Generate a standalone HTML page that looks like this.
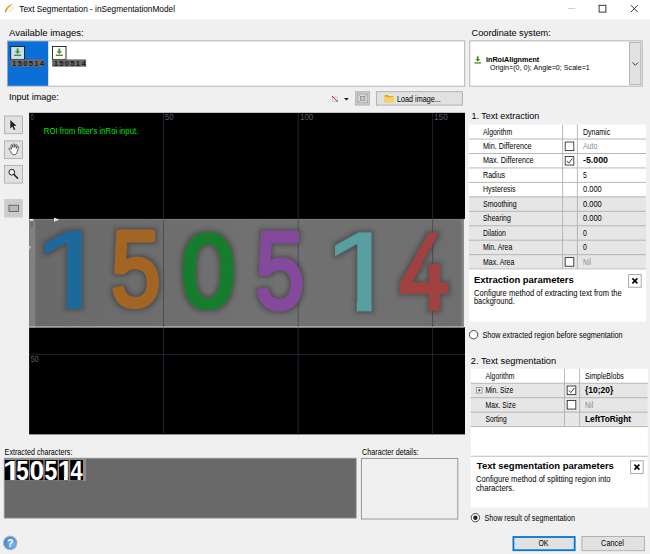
<!DOCTYPE html>
<html><head><meta charset="utf-8"><title>Text Segmentation</title>
<style>
html,body{margin:0;padding:0}
body{width:650px;height:554px;overflow:hidden;background:#f0f0f0;position:relative;font-family:'Liberation Sans', sans-serif}
.a{position:absolute;box-sizing:border-box}
svg{display:block;overflow:hidden}
</style></head><body>
<!-- title bar -->

<svg class="a" style="left:0;top:0" width="650" height="20" viewBox="0 0 650 20">
<rect x="0" y="0" width="650" height="19.400" fill="#fff"/>
<path d="M4.8 12.5 C5 8.6 8.3 4.9 13.4 3.8 C9.6 5.9 7.2 8.6 6 12.3 Z" fill="#f08a1c"/>
<path d="M12.7 6.8 C13.2 9 11.6 10.7 9.3 11.2" fill="none" stroke="#f7c088" stroke-width="0.8"/>
<path d="M568 8.500 H575.200" stroke="#cdcdcd" stroke-width="0.900"/>
<rect x="599.100" y="5.300" width="6.800" height="6.800" fill="none" stroke="#222" stroke-width="0.900"/>
<path d="M630.800 5.200 L637.800 12.200 M637.800 5.200 L630.800 12.200" stroke="#222" stroke-width="0.900"/>
</svg>

<!-- available images list -->
<svg class="a" style="left:0;top:38px" width="470" height="52" viewBox="0 38 470 52">
<rect x="7.400" y="40.900" width="457.300" height="45.300" fill="#fff" stroke="#abadb3" stroke-width="0.900"/>
<rect x="7.800" y="41.300" width="40.400" height="44.500" fill="#0a6fd6"/>
<rect x="10.700" y="46.500" width="13.800" height="12.900" fill="#c6e0f5" stroke="#1a1a1a" stroke-width="0.900"/>
<rect x="52.500" y="46.500" width="13.500" height="12.900" fill="#fff" stroke="#1a1a1a" stroke-width="0.900"/>
<g fill="#4a8e20"><path d="M16.700 48.600 h1.800 v2.700 h1.900 l-2.800 2.800 l-2.800 -2.800 h1.900z"/><rect x="14.100" y="54.600" width="7" height="1.400"/>
<path d="M58.400 48.600 h1.800 v2.700 h1.900 l-2.800 2.800 l-2.800 -2.800 h1.900z"/><rect x="55.800" y="54.600" width="7" height="1.400"/></g>
<rect x="10.5" y="59.4" width="34" height="7.3" fill="#6b6b6b"/><text transform="translate(12.1,65.7) scale(1.1,1)" font-family="Liberation Sans, sans-serif" font-weight="bold" font-size="7" letter-spacing="1.15" fill="#1c1c1c">150514</text><rect x="52.1" y="59.4" width="34" height="7.3" fill="#6b6b6b"/><text transform="translate(53.7,65.7) scale(1.1,1)" font-family="Liberation Sans, sans-serif" font-weight="bold" font-size="7" letter-spacing="1.15" fill="#1c1c1c">150514</text>
</svg>

<!-- coordinate system -->
<svg class="a" style="left:460px;top:38px" width="190" height="52" viewBox="460 38 190 52">
<rect x="469.800" y="40.900" width="172.400" height="45.300" fill="#fff" stroke="#abadb3" stroke-width="0.900"/>
<rect x="629.600" y="42.400" width="11.200" height="42.300" fill="#e1e1e1" stroke="#adadad" stroke-width="0.900"/>
<path d="M632.500 62.500 L635.300 65.300 L638.100 62.500" fill="none" stroke="#333" stroke-width="0.900"/>
<g fill="#4a8e20"><path d="M476.900 56.300 h1.700 v2.600 h1.700 l-2.550 2.700 l-2.550 -2.700 h1.700z"/><rect x="474.500" y="62.300" width="6.500" height="1.300"/></g>
</svg>

<!-- toolbar above viewer -->
<svg class="a" style="left:325px;top:88px" width="145" height="22" viewBox="325 88 145 22">
<rect x="332.6" y="97" width="4.8" height="4.6" fill="none" stroke="#bdbdbd" stroke-width="0.7"/>
<path d="M332 96 L337.8 102" stroke="#d62020" stroke-width="1"/>
<path d="M344 97.9 h4.8 l-2.4 2.7z" fill="#111"/>
<rect x="355.6" y="91.7" width="14" height="13.4" fill="#cbcbcb" stroke="#b4b4b4" stroke-width="0.9"/>
<rect x="357.8" y="94" width="9.6" height="8.8" fill="#d8d8d8" stroke="#9a9a9a" stroke-width="0.6"/>
<rect x="360.4" y="96.4" width="4.4" height="4" fill="#c4c4c4" stroke="#7c7c7c" stroke-width="0.6"/>
<path d="M357.8 94 l2.6 2.4 M367.4 94 l-2.600 2.400 M357.800 102.800 l2.600 -2.400 M367.400 102.800 l-2.600 -2.400" stroke="#9a9a9a" stroke-width="0.500"/>
<rect x="376.400" y="91.700" width="86" height="13.400" fill="#e1e1e1" stroke="#adadad" stroke-width="0.900"/>
<path d="M384.600 95 h3.400 l0.900 1 h4.500 v6.200 h-8.800z" fill="#e3a82a"/><path d="M384.600 97.100 h8.800 v5.100 h-8.800z" fill="#f7d35e"/>
</svg>
<!-- left tool buttons -->
<svg class="a" style="left:0;top:110px" width="28" height="112" viewBox="0 110 28 112">
<g fill="#e1e1e1" stroke="#adadad" stroke-width="0.900">
<rect x="4.600" y="116" width="17.900" height="17.700"/><rect x="4.600" y="140.900" width="17.900" height="17.700"/><rect x="4.600" y="165.400" width="17.900" height="17.700"/></g>
<rect x="4.200" y="199" width="18.600" height="18.500" fill="#cccccc"/>
<path d="M10.300 120 v8.400 l2 -1.900 l1.600 3.500 l1.400 -0.600 l-1.600 -3.400 l2.800 -0.200z" fill="#222"/>
<path transform="translate(0.500,2)" d="M10.200 149.500 c-1.500-1.800-2.300-3-1.400-3.500 c.8-.4 1.500.6 2.200 1.400 l-.6-3.600 c-.2-1.200 1.200-1.400 1.500-.3 l.5 2 l.1-2.800 c0-1.100 1.500-1.100 1.600 0 l.2 2.800 l.6-2.300 c.3-1 1.600-.7 1.500.3 l-.4 2.800 l.8-1.500 c.5-.9 1.600-.3 1.300.6 c-.6 1.900-1 3.300-1.500 4.800 c-.5 1.600-1.300 2.500-3 2.500 c-1.600 0-2.400-.7-3.400-3.200z" fill="#fff" stroke="#222" stroke-width="0.700"/>
<circle cx="11.800" cy="172.200" r="2.900" fill="#e8f0f8" stroke="#222" stroke-width="1"/>
<path d="M14 174.500 L17.600 178.200" stroke="#222" stroke-width="1.600" stroke-linecap="round"/>
<rect x="9" y="205.200" width="9.400" height="6.300" fill="#b8b8b8" stroke="#555" stroke-width="0.800"/>
</svg>

<!-- viewer -->

<svg class="a" style="left:0;top:0" width="650" height="554" viewBox="0 0 650 554">
<defs><clipPath id="c1r"><path d="M0 -160 H120 V-20 H69.0 V1.5 H48.5 V-20 H0z"/></clipPath><clipPath id="c1r"><path d="M0 -160 H120 V-20 H69.0 V1.5 H48.5 V-20 H0z"/></clipPath><clipPath id="c4r"><path d="M-20 -160 L99.7 -160 L48 -83 L130 -83 L130 20 L-20 20 Z"/></clipPath><clipPath id="c4h"><path d="M-20 -170 L116 -170 L58 -89 L140 -89 L140 30 L-20 30 Z"/></clipPath><clipPath id="c1b"><path d="M0 -160 H120 V-22 H74 V2 H46 V-22 H0z"/></clipPath><clipPath id="c1h"><path d="M-20 -170 H140 V-30 H76.5 V12 H41 V-30 H-20z"/></clipPath><filter id="hb" x="-5%" y="-15%" width="110%" height="130%"><feMorphology in="SourceAlpha" operator="dilate" radius="1.6" result="d"/><feGaussianBlur in="d" stdDeviation="2.2" result="b"/><feFlood flood-color="#303030" flood-opacity="0.5"/><feComposite in2="b" operator="in" result="h"/><feMerge><feMergeNode in="h"/><feMergeNode in="SourceGraphic"/></feMerge></filter></defs>
<rect x="29.100" y="112.800" width="435.900" height="321.600" fill="#000"/>
<g stroke="#2b2b3d" stroke-width="0.8">
<path d="M163.500 113 V434.400 M298.200 113 V434.400 M432.600 113 V434.400 M29.200 354.400 H465"/>
</g>
<linearGradient id="bg" x1="0" x2="1" y1="0" y2="0"><stop offset="0" stop-color="#696969"/><stop offset="0.5" stop-color="#717171"/><stop offset="1" stop-color="#6f6f6f"/></linearGradient>
<rect x="29.1" y="218.9" width="434.7" height="108.4" fill="url(#bg)"/>
<rect x="29.1" y="218.9" width="6.3" height="108.4" fill="#818181"/>
<rect x="460.8" y="218.9" width="3" height="108.4" fill="#7e7e7e"/>
<rect x="463.8" y="218.9" width="1.2" height="108.4" fill="#eeeeee"/>
<path d="M29.1 327 H463.8" stroke="#d4d4d4" stroke-width="1.1"/>
<path d="M29.1 219.5 H463.8" stroke="#7c7c7c" stroke-width="1.2"/>
<rect x="29.8" y="219" width="3.4" height="1.6" fill="#f4f4f4"/>
<g stroke="#34344a" stroke-width="0.7" opacity="0.8">
<path d="M163.500 219 V327 M298.200 219 V327 M432.600 219 V327"/>
</g>
<g filter="url(#hb)">
<g transform="translate(31.52,308.14) scale(0.7267,0.5550)" clip-path="url(#c1r)"><text font-family="Liberation Sans, sans-serif" font-size="200" fill="#1f6b9c" stroke="#1f6b9c" stroke-width="2" stroke-linejoin="round">1</text></g>
<g transform="translate(110.70,306.09) scale(0.4495,0.5358)"><text font-family="Liberation Sans, sans-serif" font-size="200" fill="#a36524" stroke="#a36524" stroke-width="8" stroke-linejoin="round">5</text></g>
<g transform="translate(181.08,307.45) scale(0.4877,0.5159)"><text font-family="Liberation Sans, sans-serif" font-size="200" fill="#197d2d" stroke="#197d2d" stroke-width="9" stroke-linejoin="round">0</text></g>
<g transform="translate(255.44,308.04) scale(0.4398,0.5426)"><text font-family="Liberation Sans, sans-serif" font-size="200" fill="#84499c" stroke="#84499c" stroke-width="8" stroke-linejoin="round">5</text></g>
<g transform="translate(322.10,310.64) scale(0.7168,0.5636)" clip-path="url(#c1r)"><text font-family="Liberation Sans, sans-serif" font-size="200" fill="#589fa1" stroke="#589fa1" stroke-width="2" stroke-linejoin="round">1</text></g>
<g transform="translate(399.37,308.79) scale(0.4514,0.5356)" clip-path="url(#c4r)"><text font-family="Liberation Sans, sans-serif" font-size="200" fill="#a24241" stroke="#a24241" stroke-width="7" stroke-linejoin="round">4</text></g>
</g>
<path d="M54 217.600 l5.500 2.100 l-5.500 2.100z" fill="#e4e4e4"/>
<path d="M29.300 246 h1.800 l-1.800 4z" fill="#ccc"/>
<!-- extracted characters -->
<rect x="4.200" y="458.200" width="352" height="59.900" fill="#696969" stroke="#9a9a9a" stroke-width="0.800"/>
<rect x="4.300" y="458.600" width="81.800" height="22.400" fill="#8c8c8c"/>
<rect x="4.8" y="460" width="10.40" height="20.200" fill="#000"/>
<g transform="translate(3.11,480.10) scale(0.1563,0.1399)" clip-path="url(#c1b)"><text font-family="Liberation Sans, sans-serif" font-weight="bold" font-size="200" fill="#fff">1</text></g>
<rect x="16.3" y="460" width="12.50" height="20.200" fill="#000"/>
<g transform="translate(16.23,479.82) scale(0.1120,0.1379)"><text font-family="Liberation Sans, sans-serif" font-weight="bold" font-size="200" fill="#fff">5</text></g>
<rect x="29.9" y="460" width="13.40" height="20.200" fill="#000"/>
<g transform="translate(29.58,479.83) scale(0.1320,0.1359)"><text font-family="Liberation Sans, sans-serif" font-weight="bold" font-size="200" fill="#fff">0</text></g>
<rect x="44.7" y="460" width="12.90" height="20.200" fill="#000"/>
<g transform="translate(44.61,479.82) scale(0.1150,0.1379)"><text font-family="Liberation Sans, sans-serif" font-weight="bold" font-size="200" fill="#fff">5</text></g>
<rect x="59" y="460" width="9.50" height="20.200" fill="#000"/>
<g transform="translate(57.79,480.10) scale(0.1361,0.1399)" clip-path="url(#c1b)"><text font-family="Liberation Sans, sans-serif" font-weight="bold" font-size="200" fill="#fff">1</text></g>
<rect x="70.3" y="460" width="12.70" height="20.200" fill="#000"/>
<g transform="translate(70.47,480.10) scale(0.1093,0.1399)"><text font-family="Liberation Sans, sans-serif" font-weight="bold" font-size="200" fill="#fff">4</text></g>
<rect x="361.400" y="458.400" width="96.400" height="60.600" fill="#f0f0f0" stroke="#8e8e8e" stroke-width="0.900"/>
<!-- help icon -->
<radialGradient id="hg" cx="0.7" cy="0.6" r="0.8"><stop offset="0" stop-color="#7cb8ee"/><stop offset="1" stop-color="#3f7fc4"/></radialGradient>
<circle cx="10.200" cy="542.900" r="7.400" fill="#c6c6cc"/>
<circle cx="10.200" cy="542.900" r="6.200" fill="url(#hg)" stroke="#4a84c0" stroke-width="0.500"/>
<text x="10.200" y="546.700" text-anchor="middle" font-family="Liberation Sans, sans-serif" font-weight="bold" font-size="10.500" fill="#fff">?</text>
</svg>

<!-- right panel -->
<svg class="a" style="left:460px;top:105px" width="190" height="449" viewBox="460 105 190 449">
<rect x="468.9" y="124.6" width="177.10000000000002" height="72.25" fill="#fff"/>
<rect x="468.9" y="196.85" width="177.10000000000002" height="72.25" fill="#e6e6e6"/>
<path d="M468.9 139.05 H646" stroke="#b0b0b0" stroke-width="0.9"/>
<path d="M468.9 153.50 H646" stroke="#b0b0b0" stroke-width="0.9"/>
<path d="M468.9 167.95 H646" stroke="#b0b0b0" stroke-width="0.9"/>
<path d="M468.9 182.40 H646" stroke="#b0b0b0" stroke-width="0.9"/>
<path d="M468.9 196.85 H646" stroke="#b0b0b0" stroke-width="0.9"/>
<path d="M468.9 211.30 H646" stroke="#b0b0b0" stroke-width="0.9"/>
<path d="M468.9 225.75 H646" stroke="#b0b0b0" stroke-width="0.9"/>
<path d="M468.9 240.20 H646" stroke="#b0b0b0" stroke-width="0.9"/>
<path d="M468.9 254.65 H646" stroke="#b0b0b0" stroke-width="0.9"/>
<path d="M468.9 269.10 H646" stroke="#b0b0b0" stroke-width="0.9"/>
<path d="M562.6 124.6 V269.10" stroke="#b0b0b0" stroke-width="0.9"/>
<path d="M577.4 124.6 V269.10" stroke="#b0b0b0" stroke-width="0.9"/>
<rect x="565.2" y="142" width="8.6" height="8.6" fill="#fff" stroke="#333" stroke-width="0.9"/>
<rect x="565.2" y="156.45" width="8.6" height="8.6" fill="#fff" stroke="#333" stroke-width="0.9"/>
<path d="M566.8000000000001 160.85 l2 2.2 l3.6 -4.6" fill="none" stroke="#222" stroke-width="0.9"/>
<rect x="565.2" y="257.6" width="8.6" height="8.6" fill="#fff" stroke="#333" stroke-width="0.9"/>
<rect x="468.9" y="269.50" width="177.10000000000002" height="52.10" fill="#fff"/>
<rect x="628.6" y="274.6" width="12.6" height="12.6" fill="#fff" stroke="#a0a0a0" stroke-width="0.9"/>
<path d="M632.4 278.4 l5 5 M637.4 278.4 l-5 5" stroke="#000" stroke-width="1.6"/>
<circle cx="473.6" cy="334.7" r="4.2" fill="#fff" stroke="#333" stroke-width="0.9"/>
<rect x="470.8" y="368.8" width="176.99999999999994" height="87.50" fill="#fff"/>
<rect x="470.8" y="383.25" width="176.99999999999994" height="43.35" fill="#e6e6e6"/>
<path d="M470.8 383.25 H647.8" stroke="#b0b0b0" stroke-width="0.9"/>
<path d="M470.8 397.70 H647.8" stroke="#b0b0b0" stroke-width="0.9"/>
<path d="M470.8 412.15 H647.8" stroke="#b0b0b0" stroke-width="0.9"/>
<path d="M470.8 426.60 H647.8" stroke="#b0b0b0" stroke-width="0.9"/>
<path d="M470.8 456.3 H647.8" stroke="#b0b0b0" stroke-width="0.9"/>
<path d="M564.5 368.8 V426.60" stroke="#b0b0b0" stroke-width="0.9"/>
<path d="M579.6 368.8 V426.60" stroke="#b0b0b0" stroke-width="0.9"/>
<rect x="567.2" y="386" width="8.6" height="8.6" fill="#fff" stroke="#333" stroke-width="0.9"/>
<path d="M568.8000000000001 390.4 l2 2.2 l3.6 -4.6" fill="none" stroke="#222" stroke-width="0.9"/>
<rect x="567.2" y="400.45" width="8.6" height="8.6" fill="#fff" stroke="#333" stroke-width="0.9"/>
<rect x="476.4" y="387.4" width="5.6" height="5.6" fill="#fff" stroke="#888" stroke-width="0.8"/>
<path d="M477.7 390.2 h3 M479.2 388.7 v3" stroke="#222" stroke-width="0.8"/>
<rect x="470.8" y="456.8" width="176.99999999999994" height="50.80" fill="#fff"/>
<rect x="630.6" y="460.8" width="12.6" height="12.6" fill="#fff" stroke="#a0a0a0" stroke-width="0.9"/>
<path d="M634.4 464.6 l5 5 M639.4 464.6 l-5 5" stroke="#000" stroke-width="1.6"/>
<circle cx="475.4" cy="517.7" r="4.2" fill="#fff" stroke="#333" stroke-width="0.9"/>
<circle cx="475.4" cy="517.7" r="2.2" fill="#222"/>
<rect x="513.4" y="537" width="61.3" height="13.2" fill="#e1e1e1" stroke="#0078d7" stroke-width="1.8"/>
<rect x="581.9" y="536.5" width="62.6" height="14.2" fill="#e1e1e1" stroke="#adadad" stroke-width="0.9"/>
</svg>
<svg class="a" style="left:0;top:0" width="650" height="554" viewBox="0 0 650 554">
<text transform="translate(19.30,11.80) scale(0.8995,1)" font-family="Liberation Sans, sans-serif" font-size="9.2" fill="#000">Text Segmentation - inSegmentationModel</text>
<text transform="translate(9.00,35.70) scale(1.0179,1)" font-family="Liberation Sans, sans-serif" font-size="9.4" fill="#000">Available images:</text>
<text transform="translate(471.50,35.70) scale(0.9818,1)" font-family="Liberation Sans, sans-serif" font-size="9.4" fill="#000">Coordinate system:</text>
<text transform="translate(9.00,99.80) scale(0.9649,1)" font-family="Liberation Sans, sans-serif" font-size="9.4" fill="#000">Input image:</text>
<text transform="translate(397.00,101.60) scale(0.8505,1)" font-family="Liberation Sans, sans-serif" font-size="8.5" fill="#000">Load image...</text>
<text transform="translate(486.00,62.00) scale(1.0308,1)" font-family="Liberation Sans, sans-serif" font-size="7" font-weight="bold" fill="#000">inRoiAlignment</text>
<text transform="translate(490.00,70.00) scale(1.0218,1)" font-family="Liberation Sans, sans-serif" font-size="7" fill="#000">Origin=(0, 0); Angle=0; Scale=1</text>
<text transform="translate(43.80,134.40) scale(0.8623,1)" font-family="Liberation Sans, sans-serif" font-size="9" fill="#00e400">ROI from filter&#x27;s inRoi input.</text>
<text transform="translate(30.40,119.80) scale(0.7200,1)" font-family="Liberation Sans, sans-serif" font-size="8.5" fill="#5a5a6c">0</text>
<text transform="translate(165.00,119.80) scale(0.9252,1)" font-family="Liberation Sans, sans-serif" font-size="8.5" fill="#5a5a6c">50</text>
<text transform="translate(300.00,119.80) scale(0.9340,1)" font-family="Liberation Sans, sans-serif" font-size="8.5" fill="#5a5a6c">100</text>
<text transform="translate(434.00,119.80) scale(0.9686,1)" font-family="Liberation Sans, sans-serif" font-size="8.5" fill="#5a5a6c">150</text>
<text transform="translate(30.40,362.00) scale(0.8841,1)" font-family="Liberation Sans, sans-serif" font-size="8.5" fill="#5a5a6c">50</text>
<text transform="translate(30.40,226.60) scale(0.5200,1)" font-family="Liberation Sans, sans-serif" font-size="8" fill="#34345a">0</text>
<text transform="translate(471.50,118.85) scale(0.9582,1)" font-family="Liberation Sans, sans-serif" font-size="9.4" fill="#000">1. Text extraction</text>
<text transform="translate(470.80,363.50) scale(0.9873,1)" font-family="Liberation Sans, sans-serif" font-size="9.4" fill="#000">2. Text segmentation</text>
<text transform="translate(4.60,454.50) scale(0.8455,1)" font-family="Liberation Sans, sans-serif" font-size="8.5" fill="#000">Extracted characters:</text>
<text transform="translate(362.00,454.60) scale(0.8513,1)" font-family="Liberation Sans, sans-serif" font-size="8.5" fill="#000">Character details:</text>
<text transform="translate(474.00,282.80) scale(1.0522,1)" font-family="Liberation Sans, sans-serif" font-size="9" font-weight="bold" fill="#000">Extraction parameters</text>
<text transform="translate(474.00,295.70) scale(0.8910,1)" font-family="Liberation Sans, sans-serif" font-size="8.5" fill="#000">Configure method of extracting text from the</text>
<text transform="translate(474.00,304.20) scale(0.8724,1)" font-family="Liberation Sans, sans-serif" font-size="8.5" fill="#000">background.</text>
<text transform="translate(482.40,337.70) scale(0.8536,1)" font-family="Liberation Sans, sans-serif" font-size="8.5" fill="#000">Show extracted region before segmentation</text>
<text transform="translate(476.80,468.70) scale(1.0564,1)" font-family="Liberation Sans, sans-serif" font-size="9" font-weight="bold" fill="#000">Text segmentation parameters</text>
<text transform="translate(476.00,481.60) scale(0.8968,1)" font-family="Liberation Sans, sans-serif" font-size="8.5" fill="#000">Configure method of splitting region into</text>
<text transform="translate(476.00,490.60) scale(0.9117,1)" font-family="Liberation Sans, sans-serif" font-size="8.5" fill="#000">characters.</text>
<text transform="translate(484.40,520.70) scale(0.8454,1)" font-family="Liberation Sans, sans-serif" font-size="8.5" fill="#000">Show result of segmentation</text>
<text transform="translate(538.40,546.10) scale(0.8246,1)" font-family="Liberation Sans, sans-serif" font-size="8.5" fill="#000">OK</text>
<text transform="translate(601.10,546.10) scale(0.8619,1)" font-family="Liberation Sans, sans-serif" font-size="8.5" fill="#000">Cancel</text>
<text transform="translate(483.00,134.50) scale(0.8124,1)" font-family="Liberation Sans, sans-serif" font-size="8.5" fill="#000">Algorithm</text>
<text transform="translate(583.00,134.50) scale(0.8222,1)" font-family="Liberation Sans, sans-serif" font-size="8.5" fill="#000">Dynamic</text>
<text transform="translate(483.00,148.95) scale(0.8555,1)" font-family="Liberation Sans, sans-serif" font-size="8.5" fill="#000">Min. Difference</text>
<text transform="translate(583.00,148.95) scale(0.8165,1)" font-family="Liberation Sans, sans-serif" font-size="8.5" fill="#8a8a8a">Auto</text>
<text transform="translate(483.00,163.40) scale(0.8551,1)" font-family="Liberation Sans, sans-serif" font-size="8.5" fill="#000">Max. Difference</text>
<text transform="translate(583.00,163.40) scale(0.9799,1)" font-family="Liberation Sans, sans-serif" font-size="9" font-weight="bold" fill="#000">-5.000</text>
<text transform="translate(483.00,177.85) scale(0.8394,1)" font-family="Liberation Sans, sans-serif" font-size="8.5" fill="#000">Radius</text>
<text transform="translate(583.00,177.85) scale(0.8000,1)" font-family="Liberation Sans, sans-serif" font-size="8.5" fill="#000">5</text>
<text transform="translate(483.00,192.30) scale(0.8244,1)" font-family="Liberation Sans, sans-serif" font-size="8.5" fill="#000">Hysteresis</text>
<text transform="translate(583.00,192.30) scale(0.8819,1)" font-family="Liberation Sans, sans-serif" font-size="8.5" fill="#000">0.000</text>
<text transform="translate(483.00,206.75) scale(0.8311,1)" font-family="Liberation Sans, sans-serif" font-size="8.5" fill="#000">Smoothing</text>
<text transform="translate(583.00,206.75) scale(0.8819,1)" font-family="Liberation Sans, sans-serif" font-size="8.5" fill="#000">0.000</text>
<text transform="translate(483.00,221.20) scale(0.8164,1)" font-family="Liberation Sans, sans-serif" font-size="8.5" fill="#000">Shearing</text>
<text transform="translate(583.00,221.20) scale(0.8819,1)" font-family="Liberation Sans, sans-serif" font-size="8.5" fill="#000">0.000</text>
<text transform="translate(483.00,235.65) scale(0.8036,1)" font-family="Liberation Sans, sans-serif" font-size="8.5" fill="#000">Dilation</text>
<text transform="translate(583.00,235.65) scale(0.8000,1)" font-family="Liberation Sans, sans-serif" font-size="8.5" fill="#000">0</text>
<text transform="translate(483.00,250.10) scale(0.8186,1)" font-family="Liberation Sans, sans-serif" font-size="8.5" fill="#000">Min. Area</text>
<text transform="translate(583.00,250.10) scale(0.8000,1)" font-family="Liberation Sans, sans-serif" font-size="8.5" fill="#000">0</text>
<text transform="translate(483.00,264.55) scale(0.8203,1)" font-family="Liberation Sans, sans-serif" font-size="8.5" fill="#000">Max. Area</text>
<text transform="translate(583.00,264.55) scale(0.7979,1)" font-family="Liberation Sans, sans-serif" font-size="8.5" fill="#8a8a8a">Nil</text>
<text transform="translate(485.50,378.60) scale(0.8096,1)" font-family="Liberation Sans, sans-serif" font-size="8.5" fill="#000">Algorithm</text>
<text transform="translate(585.00,378.60) scale(0.8235,1)" font-family="Liberation Sans, sans-serif" font-size="8.5" fill="#000">SimpleBlobs</text>
<text transform="translate(485.50,393.05) scale(0.7948,1)" font-family="Liberation Sans, sans-serif" font-size="8.5" fill="#000">Min. Size</text>
<text transform="translate(585.00,393.05) scale(0.9436,1)" font-family="Liberation Sans, sans-serif" font-size="9" font-weight="bold" fill="#000">{10;20}</text>
<text transform="translate(485.50,407.50) scale(0.8114,1)" font-family="Liberation Sans, sans-serif" font-size="8.5" fill="#000">Max. Size</text>
<text transform="translate(585.00,407.50) scale(0.8278,1)" font-family="Liberation Sans, sans-serif" font-size="8.5" fill="#8a8a8a">Nil</text>
<text transform="translate(485.50,421.95) scale(0.7903,1)" font-family="Liberation Sans, sans-serif" font-size="8.5" fill="#000">Sorting</text>
<text transform="translate(585.00,421.95) scale(0.9233,1)" font-family="Liberation Sans, sans-serif" font-size="9" font-weight="bold" fill="#000">LeftToRight</text>
</svg>
</body></html>
